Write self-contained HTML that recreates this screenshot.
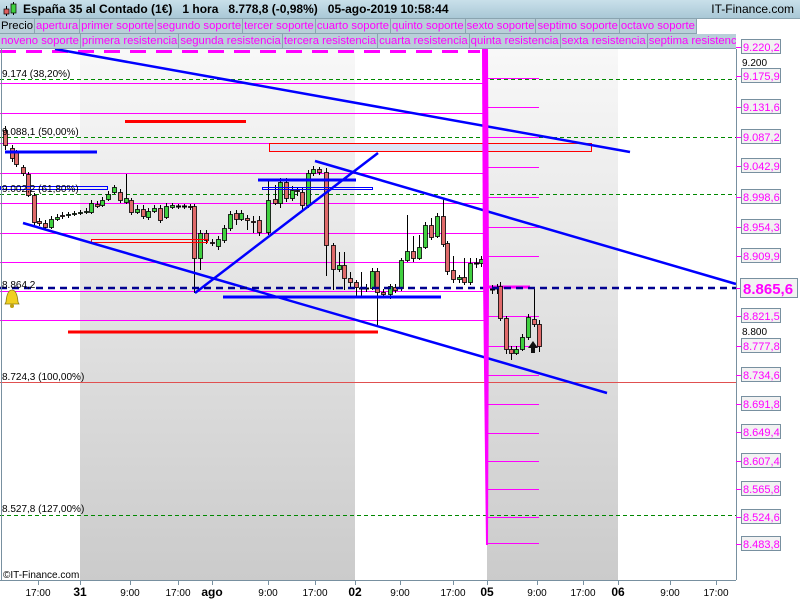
<!DOCTYPE html>
<html><head><meta charset="utf-8"><style>
html,body{margin:0;padding:0;width:800px;height:600px;overflow:hidden;background:#fff;font-family:"Liberation Sans",sans-serif}
#hdr{position:absolute;left:0;top:0;width:800px;height:18px;background:linear-gradient(#c9e0ea,#a9c8d6);border-bottom:1px solid #8aa4b0;font-size:12px;font-weight:bold;line-height:18px}
.tabs{position:absolute;left:0;height:15px;font-size:11.3px;line-height:14px;white-space:nowrap}
.tabs span{display:inline-block;background:#b9cfd9;color:#f0f;border-right:1px solid #8aa4b0;border-bottom:1px solid #8aa4b0;padding:0 1px;height:14px;margin-right:0}
</style></head><body>
<svg id="c" style="position:absolute;left:0;top:0" width="800" height="600" viewBox="0 0 800 600">
<defs><linearGradient id="g" x1="0" y1="0" x2="0" y2="1"><stop offset="0" stop-color="#f8f8f8"/><stop offset="1" stop-color="#cbcbcb"/></linearGradient></defs>
<rect x="80" y="49" width="275" height="531" fill="url(#g)"/>
<rect x="487" y="49" width="131" height="531" fill="url(#g)"/>
<g id="lines"></g>
<g id="cand"></g>
<g id="over"></g>
<line x1="736.5" y1="49" x2="736.5" y2="580" stroke="#7890a0"/>
<line x1="0" y1="580.5" x2="736" y2="580.5" stroke="#7890a0"/>
<line x1="1.5" y1="49" x2="1.5" y2="580" stroke="#7890a0"/>
<g font-size="10" fill="#000">
<text x="2" y="77">9.174 (38,20%)</text>
<text x="2" y="135">9.088,1 (50,00%)</text>
<text x="2" y="192">9.002,2 (61,80%)</text>
<text x="2" y="288">8.864,2</text>
<text x="2" y="380">8.724,3 (100,00%)</text>
<text x="2" y="512">8.527,8 (127,00%)</text>
<text x="3" y="578">©IT-Finance.com</text>
</g>
<g transform="translate(12,298)"><path d="M-6 4 Q-5 -8 0 -8 Q5 -8 6 4 L7 6 L-7 6 Z" fill="#f0d020" stroke="#8a7a10" stroke-width="0.8"/><circle cx="0" cy="8" r="2" fill="#c0a010"/></g>
<g id="axis" font-size="10"></g>
</svg>
<div id="hdr"><svg style="position:absolute;left:3px;top:2px" width="14" height="14"><line x1="3.5" y1="4" x2="3.5" y2="14" stroke="#000"/><rect x="1" y="7" width="5" height="5" fill="#e06060" stroke="#000" stroke-width="0.7"/><line x1="10.5" y1="0" x2="10.5" y2="13" stroke="#000"/><rect x="8" y="2" width="5" height="9" fill="#40d040" stroke="#000" stroke-width="0.7"/></svg><span style="position:absolute;left:23px;top:0">España 35 al Contado (1€) &nbsp; 1 hora &nbsp; 8.778,8 (-0,98%) &nbsp; 05-ago-2019 10:58:44</span><span style="position:absolute;right:6px;top:0;font-weight:normal">IT-Finance.com</span></div>
<div class="tabs" style="top:19px"><span style="color:#000">Precio</span><span>apertura</span><span>primer soporte</span><span>segundo soporte</span><span>tercer soporte</span><span>cuarto soporte</span><span>quinto soporte</span><span>sexto soporte</span><span>septimo soporte</span><span>octavo soporte</span></div>
<div class="tabs" style="top:34px;width:736px;overflow:hidden"><span>noveno soporte</span><span>primera resistencia</span><span>segunda resistencia</span><span>tercera resistencia</span><span>cuarta resistencia</span><span>quinta resistencia</span><span>sexta resistencia</span><span>septima resistencia</span></div>
<script>
var NS="http://www.w3.org/2000/svg";
function el(p,t,a,txt){var e=document.createElementNS(NS,t);for(var k in a)e.setAttribute(k,a[k]);if(txt)e.textContent=txt;document.getElementById(p).appendChild(e);return e;}
function L(p,x1,y1,x2,y2,c,w,d){var a={x1:x1,y1:y1,x2:x2,y2:y2,stroke:c,"stroke-width":w||1};if(d)a["stroke-dasharray"]=d;el(p,"line",a);}
[83,113,143,173,203,233,262,291,320].forEach(function(y){L("lines",0,y+.5,487,y+.5,"#f0f",1);});
L("lines",0,79.5,736,79.5,"#080",1,"4,3");
L("lines",0,137.5,736,137.5,"#080",1,"4,3");
L("lines",0,194.5,736,194.5,"#080",1,"4,3");
L("lines",0,515.5,736,515.5,"#080",1,"4,3");
L("lines",0,382.5,736,382.5,"#e05050",1);
L("lines",0,51.5,480,51.5,"#f0f",3,"16,10");
var lv=[78,107,137,167,197,227,256,316,346,375,404,433,461,489,517,543];
lv.forEach(function(y){L("lines",487,y+.5,539,y+.5,"#f0f",1);});
L("lines",487,287,530,287,"#f0f",3);
var C=[[5,130,145,126,150],[12,148,158,145,162],[16,152,164,150,167],[23,167,173,165,176],[28,174,195,172,197],[34,195,222,193,226],[39,221,223,218,226],[45,223,227,220,230],[51,227,219,216,229],[57,219,217,214,221],[62,215,216,212,219],[68,215,214,212,218],[74,214,213,211,216],[80,213,212,210,215],[86,212,211,208,214],[91,212,203,200,214],[97,204,206,201,208],[102,205,200,197,207],[108,199,194,191,201],[114,192,187,185,194],[120,192,200,189,203],[126,202,198,174,204],[131,200,212,198,215],[137,212,209,205,214],[143,209,216,205,219],[148,217,211,208,220],[154,211,208,205,213],[160,208,220,205,223],[166,217,206,203,219],[172,207,205,203,209],[178,206,206,204,209],[184,206,206,204,209],[190,206,207,204,210],[194,206,258,204,293],[200,258,233,230,270],[206,233,240,230,244],[212,242,243,239,246],[218,246,239,236,250],[224,240,228,225,243],[230,228,214,211,231],[236,213,219,210,225],[241,219,213,210,221],[247,218,220,215,230],[253,221,222,216,233],[259,220,232,216,236],[268,232,200,180,235],[275,199,203,185,205],[280,203,182,178,208],[286,182,198,178,202],[292,198,190,186,201],[297,190,191,187,196],[302,192,205,188,210],[308,205,173,170,208],[313,173,169,166,176],[319,169,172,167,175],[326,172,245,168,276],[333,245,269,243,290],[339,269,265,252,272],[344,265,278,252,290],[350,278,282,272,288],[356,282,287,280,296],[361,288,288,272,296],[366,288,288,284,292],[372,288,271,268,290],[377,271,292,268,327],[383,292,294,289,297],[390,294,286,284,299],[395,287,290,284,293],[401,288,260,258,291],[407,260,251,215,262],[413,251,258,236,262],[419,258,247,235,260],[425,247,225,222,249],[431,225,237,218,240],[437,236,216,213,238],[443,216,244,198,247],[447,243,271,241,275],[453,270,279,256,283],[459,279,277,275,283],[464,277,282,258,285],[470,282,263,258,285],[476,263,263,258,268],[481,263,259,256,267],[492,289,289,285,294],[497,288,288,284,294],[500,286,318,282,321],[506,318,349,316,354],[511,349,353,346,360],[516,353,349,346,355],[522,349,337,334,351],[528,337,317,314,340],[534,319,324,288,327],[539,324,346,320,352]];
C.forEach(function(c){var x=c[0],o=c[1],cl=c[2],h=c[3],l=c[4];
L("cand",x+.5,h,x+.5,l,"#000",1);
var t=Math.min(o,cl),b=Math.max(o,cl);if(b-t<1){L("cand",x-2,t+.5,x+3,t+.5,"#000",2);return;}
el("cand","rect",{x:x-1.5,y:t+.5,width:4,height:b-t,fill:cl<o?"#40d040":"#e06a6a",stroke:"#000","stroke-width":.8});});
el("over","rect",{x:269.5,y:143.5,width:322,height:8,fill:"#dde6f6",stroke:"#f00","stroke-width":1});
el("over","rect",{x:91.5,y:239.5,width:116,height:3,fill:"none",stroke:"#f00","stroke-width":1});
el("over","rect",{x:0.5,y:186.5,width:107,height:3,fill:"none",stroke:"#00f","stroke-width":1});
el("over","rect",{x:262.5,y:187.5,width:110,height:2,fill:"none",stroke:"#00f","stroke-width":1});
L("over",125,121.5,246,121.5,"#f00",3);
L("over",68,332,378,332,"#f00",3);
L("over",55,49,630,152,"#00f",2.5);
L("over",315,161,736,284,"#00f",2.5);
L("over",23,223,607,393,"#00f",2.5);
L("over",195,293,378,153,"#00f",2.5);
L("over",5,152,97,152,"#00f",3);
L("over",223,297,441,297,"#00f",3);
L("over",258,180,356,180,"#00f",3);
L("over",0,288,736,288,"#000090",2.5,"7,5");
el("over","polygon",{points:"482,49 488,49 489,280 488,545 486,545 483,280",fill:"#f0f"});
el("over","path",{d:"M528 348 L533 341 L538 348 L535 348 L535 353 L531 353 L531 348 Z",fill:"#111"});
var R=[[47,"9.220,2"],[76,"9.175,9"],[107,"9.131,6"],[137,"9.087,2"],[166,"9.042,9"],[197,"8.998,6"],[227,"8.954,3"],[256,"8.909,9"],[316,"8.821,5"],[346,"8.777,8"],[375,"8.734,6"],[404,"8.691,8"],[432,"8.649,4"],[461,"8.607,4"],[489,"8.565,8"],[517,"8.524,6"],[544,"8.483,8"]];
el("axis","text",{x:742,y:66,fill:"#000"},"9.200");
el("axis","text",{x:742,y:335,fill:"#000"},"8.800");
R.forEach(function(r){L("axis",736,r[0]+.5,741,r[0]+.5,"#f0f",1);el("axis","rect",{x:741.5,y:r[0]-7.5,width:39,height:14,fill:"#f2f2f2",stroke:"#7890a0"});el("axis","text",{x:743,y:r[0]+4,fill:"#f0f","font-size":"11"},r[1]);});
L("axis",736,288.5,741,288.5,"#f0f",1);
el("axis","rect",{x:740.5,y:278.5,width:57,height:19,fill:"#f2f2f2",stroke:"#7890a0"});
el("axis","text",{x:743,y:294,fill:"#f0f","font-size":"15","font-weight":"bold"},"8.865,6");
var B=[[38,"17:00"],[80,"31",1],[130,"9:00"],[178,"17:00"],[212,"ago",1],[268,"9:00"],[315,"17:00"],[355,"02",1],[400,"9:00"],[453,"17:00"],[487,"05",1],[537,"9:00"],[583,"17:00"],[618,"06",1],[670,"9:00"],[716,"17:00"]];
B.forEach(function(b){L("axis",b[0]+.5,580,b[0]+.5,585,"#7890a0",1);var a={x:b[0],y:596,"text-anchor":"middle",fill:"#000"};if(b[2]){a["font-weight"]="bold";a["font-size"]="12";}el("axis","text",a,b[1]);});
</script>
</body></html>
